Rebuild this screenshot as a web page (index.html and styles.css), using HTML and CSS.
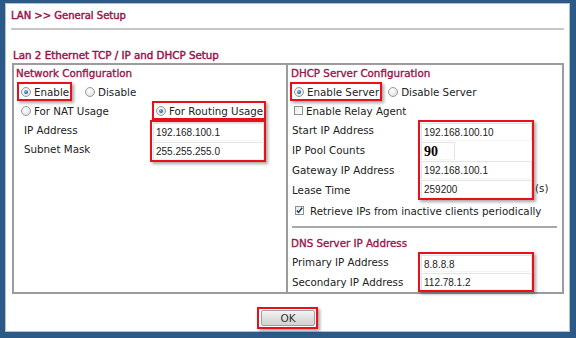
FILE: index.html
```html
<!DOCTYPE html>
<html lang="en">
<head>
    <meta charset="UTF-8">
    <meta name="viewport" content="width=device-width, initial-scale=1.0">
    <title>LAN General Setup</title>
    <link rel="stylesheet" href="styles.css">
</head>
<body>
    <div class="window">
        <div class="page-title">LAN &gt;&gt; General Setup</div>
        <div class="section-title">Lan 2 Ethernet TCP / IP and DHCP Setup</div>
        <div class="setup-box">
            <div class="col col-left">
                <div class="col-head">Network Configuration</div>
                <div class="row">
                    <label class="opt hl"><span class="radio on"></span>Enable</label>
                    <label class="opt opt-disable"><span class="radio"></span>Disable</label>
                </div>
                <div class="row">
                    <label class="opt opt-nat"><span class="radio"></span>For NAT Usage</label>
                    <label class="opt hl"><span class="radio on"></span>For Routing Usage</label>
                </div>
                <div class="fields">
                    <div class="labels labels-left">
                        <div>IP Address</div>
                        <div>Subnet Mask</div>
                    </div>
                    <div class="values hl">
                        <div class="val">192.168.100.1</div>
                        <div class="val">255.255.255.0</div>
                    </div>
                </div>
            </div>
            <div class="col col-right">
                <div class="col-head">DHCP Server Configuration</div>
                <div class="row">
                    <label class="opt hl"><span class="radio on"></span>Enable Server</label>
                    <label class="opt opt-dis-server"><span class="radio"></span>Disable Server</label>
                </div>
                <div class="row">
                    <label class="opt"><span class="check"></span>Enable Relay Agent</label>
                </div>
                <div class="fields">
                    <div class="labels labels-right">
                        <div>Start IP Address</div>
                        <div>IP Pool Counts</div>
                        <div>Gateway IP Address</div>
                        <div>Lease Time</div>
                    </div>
                    <div class="values hl">
                        <div class="val">192.168.100.10</div>
                        <div class="val-row"><div class="val val-small">90</div></div>
                        <div class="val">192.168.100.1</div>
                        <div class="val">259200</div>
                    </div>
                    <div class="unit">(s)</div>
                </div>
                <div class="row row-retrieve">
                    <label class="opt opt-retrieve">
                        <span class="check on">
                            <svg width="9" height="9" viewBox="0 0 9 9"><path d="M1.8 4.4 L3.6 6.4 L7.2 1.8" fill="none" stroke="#2b3f66" stroke-width="1.5"/></svg>
                        </span>Retrieve IPs from inactive clients periodically
                    </label>
                </div>
                <div class="separator"></div>
                <div class="col-head dns-head">DNS Server IP Address</div>
                <div class="fields">
                    <div class="labels labels-right">
                        <div>Primary IP Address</div>
                        <div>Secondary IP Address</div>
                    </div>
                    <div class="values values-dns hl">
                        <div class="val">8.8.8.8</div>
                        <div class="val">112.78.1.2</div>
                    </div>
                </div>
            </div>
        </div>
        <div class="actions">
            <span class="hl btn-wrap"><button class="button">OK</button></span>
        </div>
    </div>
</body>
</html>
```

FILE: styles.css
```css
body {
    margin: 0;
    background-color: #2d5986;
    font-family: 'DejaVu Sans', Verdana, sans-serif;
    font-size: 10.3px;
    color: #222;
    height: 338px;
    overflow: hidden;
}
.window {
    margin: 3px 6px 0 5px;
    height: 329px;
    box-sizing: border-box;
    background-color: #fff;
    border: 1px solid #a9c2dc;
    padding: 0 5px 0 5px;
}
.page-title {
    font-size: 10px;
    line-height: 20px;
    padding: 2px 0 2px 0;
    color: #98154c;
    -webkit-text-stroke: 0.45px #98154c;
    border-bottom: 2px solid #c6c6c6;
}
.section-title {
    margin-top: 17px;
    padding-left: 2px;
    font-size: 10.3px;
    line-height: 16px;
    color: #98154c;
    -webkit-text-stroke: 0.45px #98154c;
}
.setup-box {
    margin-left: 1px;
    display: grid;
    grid-template-columns: 274px 1fr;
    height: 231px;
    box-sizing: border-box;
    border: 2px solid #9c9c9c;
}
.col-left {
    border-right: 2px solid #9c9c9c;
    padding-left: 1px;
}
.col-right {
    padding-left: 2px;
}
.col-head {
    line-height: 17px;
    padding-left: 1px;
    color: #98154c;
    -webkit-text-stroke: 0.35px #98154c;
}
.row {
    display: flex;
    align-items: center;
    height: 19px;
}
.col-left .row {
    padding-left: 2px;
}
.opt {
    display: flex;
    align-items: center;
    height: 19px;
    box-sizing: border-box;
    border: 2px solid transparent;
    padding: 0 1px 0 2px;
    white-space: nowrap;
}
.hl {
    border: 2px solid #e8101a;
    box-shadow: 2px 2px 3px rgba(0, 0, 0, 0.35);
}
.opt-disable {
    margin-left: 9px;
}
.opt-nat {
    width: 135px;
}
.opt-dis-server {
    margin-left: 2px;
}
.radio {
    width: 8px;
    height: 8px;
    border-radius: 50%;
    border: 1px solid #9a9a9a;
    background: radial-gradient(circle at 40% 35%, #fff 0%, #e4e4e4 70%, #cfcfcf 100%);
    margin-right: 3px;
    position: relative;
    flex: none;
}
.radio.on::after {
    content: "";
    position: absolute;
    left: 2px;
    top: 2px;
    width: 4px;
    height: 4px;
    border-radius: 50%;
    background: radial-gradient(circle at 40% 35%, #8fc4f0 0%, #2c6aa8 60%, #1d3f66 100%);
}
.check {
    width: 9px;
    height: 9px;
    border: 1px solid #8f8f8f;
    box-sizing: border-box;
    background: linear-gradient(135deg, #e9e9e9, #fff);
    margin-right: 3px;
    flex: none;
    display: flex;
}
.check svg {
    margin: -1px;
}
.row-retrieve {
    margin-top: 1px;
}
.opt-retrieve {
    padding-left: 3px;
}
.opt-retrieve .check {
    margin-right: 6px;
}
.fields {
    display: flex;
}
.labels div {
    height: 20px;
    line-height: 20px;
}
.labels-left {
    width: 135px;
    padding-left: 9px;
    box-sizing: border-box;
}
.labels-left div {
    height: 19px;
    line-height: 20px;
}
.labels-right {
    width: 128px;
    padding-left: 2px;
    box-sizing: border-box;
}
.values {
    width: 116px;
    box-sizing: border-box;
    padding-left: 1px;
    font-family: 'Liberation Sans', Arial, sans-serif;
    font-size: 10px;
}
.val {
    height: 18px;
    line-height: 18px;
    box-sizing: border-box;
    border: 1px solid #e4e4e4;
    border-bottom-color: #f4f4f4;
    padding-left: 2px;
    margin-top: 1px;
    color: #222;
}
.val-row {
    height: 19px;
    display: flex;
}
.val-small {
    width: 34px;
    font-family: 'Liberation Serif', 'Times New Roman', serif;
    font-weight: bold;
    font-size: 14px;
    color: #000;
}
.values-dns .val {
    height: 17px;
    line-height: 17px;
}
.unit {
    align-self: flex-end;
    line-height: 19px;
    margin-bottom: 2px;
    margin-left: 1px;
}
.separator {
    height: 2px;
    background-color: #a8a8a8;
    margin: 6px 5px 0 2px;
}
.dns-head {
    margin-top: 7px;
}
.actions {
    display: flex;
    justify-content: center;
    margin-top: 13px;
}
.btn-wrap {
    display: flex;
    padding: 1px 1px 1px 2px;
}
.button {
    width: 54px;
    height: 16px;
    padding: 0;
    border: 1px solid #a0a0a0;
    border-radius: 2px;
    background: linear-gradient(#f4f4f4, #e0e0e0 50%, #d2d2d2);
    font-family: 'DejaVu Sans', Verdana, sans-serif;
    font-size: 10.5px;
    color: #333;
    line-height: 14px;
}
```
